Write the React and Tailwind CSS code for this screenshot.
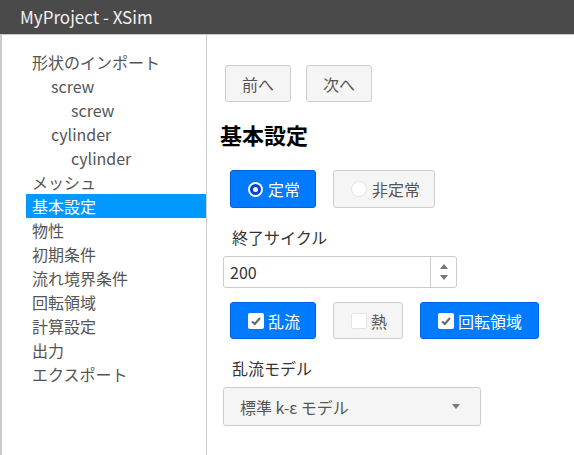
import React from "react";

const font = { fontFamily: '"Noto Sans CJK JP", "Noto Sans", sans-serif' };

function Check() {
  return (
    <span className="flex h-[16px] w-[16px] items-center justify-center rounded-[2px] bg-white">
      <svg width="12" height="12" viewBox="0 0 12 12">
        <path d="M2 6.5 L4.8 9 L10 3" fill="none" stroke="#666" strokeWidth="2" />
      </svg>
    </span>
  );
}

export default function App() {
  const items = [
    { t: "形状のインポート", pl: "pl-[6px]" },
    { t: "screw", pl: "pl-[25px]" },
    { t: "screw", pl: "pl-[45px]" },
    { t: "cylinder", pl: "pl-[25px]" },
    { t: "cylinder", pl: "pl-[45px]" },
    { t: "メッシュ", pl: "pl-[6px]" },
    { t: "基本設定", pl: "pl-[6px]", active: true },
    { t: "物性", pl: "pl-[6px]" },
    { t: "初期条件", pl: "pl-[6px]" },
    { t: "流れ境界条件", pl: "pl-[6px]" },
    { t: "回転領域", pl: "pl-[6px]" },
    { t: "計算設定", pl: "pl-[6px]" },
    { t: "出力", pl: "pl-[6px]" },
    { t: "エクスポート", pl: "pl-[6px]" },
  ];
  return (
    <div className="flex h-[455px] w-[574px] flex-col overflow-hidden bg-white" style={font}>
      <div className="flex h-[35px] shrink-0 items-center border-b border-[#c8c8c8] bg-[#4a4a4a] pl-[20px] text-[17px] text-[#f0f0f0]">
        MyProject - XSim
      </div>
      <div className="flex flex-1">
        <div className="w-[207px] shrink-0 border-l-2 border-r border-[#cccccc] pt-[15px] pl-[24px]">
          {items.map((it, i) => (
            <div
              key={i}
              className={`flex h-[24px] items-center text-[16px] leading-none ${it.pl} ${
                it.active ? "bg-[#0099ff] text-white" : "text-[#555555]"
              }`}
            >
              {it.t}
            </div>
          ))}
        </div>
        <div className="flex flex-1 flex-col pl-[13px] pt-[30px]">
          <div className="ml-[5px] flex gap-[15px]">
            <button className="h-[37px] w-[66px] rounded-[3px] border border-[#cccccc] bg-[#f5f5f5] text-[16px] text-[#555555]">
              前へ
            </button>
            <button className="h-[37px] w-[66px] rounded-[3px] border border-[#cccccc] bg-[#f5f5f5] text-[16px] text-[#555555]">
              次へ
            </button>
          </div>
          <div className="mt-[17px] text-[22px] font-bold leading-[30px] text-black">基本設定</div>
          <div className="ml-[10px] mt-[21px] flex gap-[17px]">
            <div className="flex h-[38px] w-[86px] items-center gap-[5px] rounded-[3px] border border-[#0062e0] bg-[#007bff] pl-[17px] text-[16px] text-white">
              <span className="flex h-[15px] w-[15px] items-center justify-center rounded-full bg-white">
                <span className="h-[11px] w-[11px] rounded-full border-[3px] border-[#0044dd] bg-white" />
              </span>
              定常
            </div>
            <div className="flex h-[38px] w-[102px] items-center gap-[5px] rounded-[3px] border border-[#cccccc] bg-[#f5f5f5] pl-[17px] text-[16px] text-[#555555]">
              <span className="h-[16px] w-[16px] rounded-full border border-[#e4e4e4] bg-white" />
              非定常
            </div>
          </div>
          <div className="ml-[12px] mt-[17px] text-[16px] leading-[24px] text-[#333333]">終了サイクル</div>
          <div className="ml-[3px] mt-[7px] flex h-[32px] w-[234px] rounded-[3px] border border-[#cccccc] bg-white">
            <div className="flex flex-1 items-center pl-[6px] text-[16px] text-[#333333]">200</div>
            <div className="flex w-[26px] flex-col items-center justify-center gap-[6px] border-l border-[#cccccc]">
              <svg width="8" height="5" viewBox="0 0 8 5"><path d="M0 5 L4 0 L8 5Z" fill="#777" /></svg>
              <svg width="8" height="5" viewBox="0 0 8 5"><path d="M0 0 L4 5 L8 0Z" fill="#777" /></svg>
            </div>
          </div>
          <div className="ml-[10px] mt-[14px] flex gap-[17px]">
            <div className="flex h-[37px] w-[86px] items-center gap-[4px] rounded-[3px] border border-[#0062e0] bg-[#007bff] pl-[17px] text-[16px] text-white">
              <Check />
              乱流
            </div>
            <div className="flex h-[37px] w-[70px] items-center gap-[4px] rounded-[3px] border border-[#cccccc] bg-[#f5f5f5] pl-[17px] text-[16px] text-[#555555]">
              <span className="h-[16px] w-[16px] rounded-[2px] border border-[#e4e4e4] bg-white" />
              熱
            </div>
            <div className="flex h-[37px] w-[119px] items-center gap-[4px] rounded-[3px] border border-[#0062e0] bg-[#007bff] pl-[17px] text-[16px] text-white">
              <Check />
              回転領域
            </div>
          </div>
          <div className="ml-[12px] mt-[17px] text-[16px] leading-[24px] text-[#333333]">乱流モデル</div>
          <div className="ml-[3px] mt-[7px] flex h-[39px] w-[258px] items-center justify-between rounded-[3px] border border-[#cccccc] bg-[#f5f5f5] pl-[16px] pr-[20px] text-[16px] text-[#555555]">
            <span>標準 k-ε モデル</span>
            <svg width="8" height="5" viewBox="0 0 8 5"><path d="M0 0 L4 5 L8 0Z" fill="#777" /></svg>
          </div>
        </div>
      </div>
    </div>
  );
}
